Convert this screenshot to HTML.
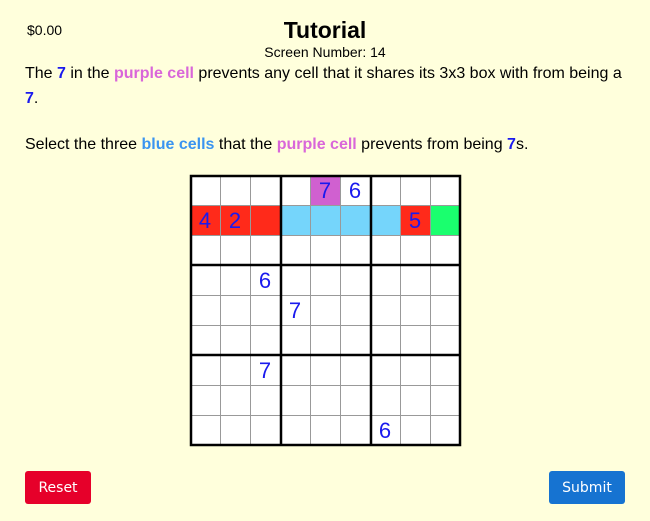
<!DOCTYPE html>
<html><head><meta charset="utf-8"><style>
body{margin:0;width:650px;height:521px;background:#ffffdc;font-family:"Liberation Sans",Arial,sans-serif;position:relative;overflow:hidden;color:#000}
.a{position:absolute;white-space:nowrap}
.b{color:#1a1aee;font-weight:bold}
.p{color:#d966d9;font-weight:bold}
.l{color:#3a94f0;font-weight:bold}
.btn{position:absolute;top:471px;height:33px;border-radius:3px;color:#fff;font-size:14px;line-height:33px;text-align:center;font-family:"DejaVu Sans",sans-serif}
</style></head><body>
<div class="a" style="left:27px;top:22px;font-size:14px">$0.00</div>
<div class="a" style="left:0;width:650px;text-align:center;top:17px;font-size:23px;font-weight:bold">Tutorial</div>
<div class="a" style="left:0;width:650px;text-align:center;top:44px;font-size:14px">Screen Number: 14</div>
<div class="a" style="left:25px;top:61px;font-size:16px;line-height:25px;white-space:normal;width:608px">The <span class="b">7</span> in the <span class="p">purple cell</span> prevents any cell that it shares its 3x3 box with from being a <span class="b">7</span>.</div>
<div class="a" style="left:25px;top:136px;font-size:16px">Select the three <span class="l">blue cells</span> that the <span class="p">purple cell</span> prevents from being <span class="b">7</span>s.</div>
<svg class="a" style="left:0;top:0" width="650" height="521">
<rect x="190" y="175" width="270" height="270" fill="#fff"/>
<rect x="310" y="175" width="30" height="30" fill="#d060d0"/>
<rect x="190" y="205" width="90" height="30" fill="#ff2a1a"/>
<rect x="280" y="205" width="120" height="30" fill="#75d5fb"/>
<rect x="400" y="205" width="30" height="30" fill="#ff2a1a"/>
<rect x="430" y="205" width="30" height="30" fill="#1aff6e"/>
<g stroke="#999" stroke-width="1">
<line x1="220.5" y1="175" x2="220.5" y2="445"/><line x1="250.5" y1="175" x2="250.5" y2="445"/>
<line x1="310.5" y1="175" x2="310.5" y2="445"/><line x1="340.5" y1="175" x2="340.5" y2="445"/>
<line x1="400.5" y1="175" x2="400.5" y2="445"/><line x1="430.5" y1="175" x2="430.5" y2="445"/>
<line y1="205.5" x1="190" y2="205.5" x2="460"/><line y1="235.5" x1="190" y2="235.5" x2="460"/>
<line y1="295.5" x1="190" y2="295.5" x2="460"/><line y1="325.5" x1="190" y2="325.5" x2="460"/>
<line y1="385.5" x1="190" y2="385.5" x2="460"/><line y1="415.5" x1="190" y2="415.5" x2="460"/>
</g>
<g stroke="#000" stroke-width="2.5" fill="none">
<rect x="191" y="176" width="269" height="269"/>
<line x1="281" y1="175" x2="281" y2="446"/><line x1="371" y1="175" x2="371" y2="446"/>
<line y1="265" x1="190" y2="265" x2="461"/><line y1="355" x1="190" y2="355" x2="461"/>
</g>
<g fill="#1a1aee" font-family="Liberation Sans,sans-serif" font-size="22" text-anchor="middle">
<text x="325" y="198">7</text><text x="355" y="198">6</text>
<text x="205" y="228">4</text><text x="235" y="228">2</text><text x="415" y="228">5</text>
<text x="265" y="288">6</text><text x="295" y="318">7</text>
<text x="265" y="378">7</text><text x="385" y="438">6</text>
</g>
</svg>
<div class="btn" style="left:25px;width:66px;background:#e6002a;line-height:35px">Reset</div>
<div class="btn" style="left:549px;width:76px;background:#1673d1;line-height:35px">Submit</div>
</body></html>
